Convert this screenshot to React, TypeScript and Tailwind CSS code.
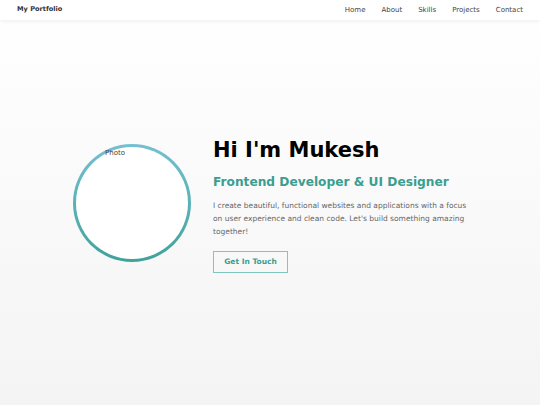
const NAV_LINKS = ["Home", "About", "Skills", "Projects", "Contact"];

function Header() {
  return (
    <header className="relative z-10 flex h-[20px] items-center justify-between bg-white px-[17px] shadow-[0_1px_4px_rgba(0,0,0,0.08)]">
      <span className="text-[6.6px] font-bold text-[#333]">My Portfolio</span>
      <nav className="flex items-center gap-[16px]">
        {NAV_LINKS.map((link) => (
          <a key={link} href="#" className="text-[7px] text-[#444]">
            {link}
          </a>
        ))}
      </nav>
    </header>
  );
}

function ProfilePhoto() {
  return (
    <div className="relative h-[118px] w-[118px] shrink-0 rounded-full bg-gradient-to-b from-[#74c0d2] to-[#3fa39a] p-[3px]">
      <div className="h-full w-full rounded-full bg-white" />
      {/* broken image alt text */}
      <span className="absolute left-[32px] top-[4px] text-[7px] text-[#444]">Photo</span>
    </div>
  );
}

export default function App() {
  return (
    <div className="min-h-[405px] bg-gradient-to-b from-white to-[#f4f4f4] font-['DejaVu_Sans',sans-serif]">
      <Header />
      <main className="flex h-[385px] items-center justify-center pb-[15px] pl-[2px]">
        <div className="flex items-center gap-[22px]">
          <div className="-mt-[5px]">
            <ProfilePhoto />
          </div>
          <div className="w-[256px]">
            <h1 className="text-[21px] font-bold leading-[26px] text-black">Hi I'm Mukesh</h1>
            <h2 className="mt-[11px] text-[12.2px] font-bold leading-[17px] text-[#3a9e90]">
              Frontend Developer &amp; UI Designer
            </h2>
            <p className="mt-[8px] text-[7.5px] leading-[13px] text-[#666]">
              I create beautiful, functional websites and applications with a focus on user experience and clean code. Let's build something amazing together!
            </p>
            <button className="mt-[13px] h-[22px] w-[75px] border border-[#7fc6bd] text-[7.5px] font-bold text-[#3a9e90]">
              Get In Touch
            </button>
          </div>
        </div>
      </main>
    </div>
  );
}
